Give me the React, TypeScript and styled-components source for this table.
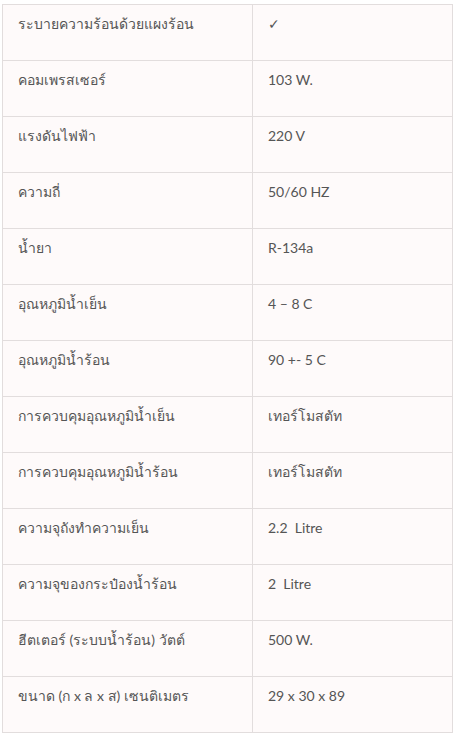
import styled, { createGlobalStyle } from "styled-components";

const GlobalStyle = createGlobalStyle`
  body {
    margin: 0;
    background: #ffffff;
    font-family: Lato, "Noto Sans", sans-serif;
  }
`;

const Wrapper = styled.div`
  padding: 4px 0 0 2px;
`;

const Table = styled.table`
  width: 450px;
  border-collapse: collapse;
  table-layout: fixed;
  background: #fefafa;
  color: #555555;
  font-size: 14px;
`;

const Row = styled.tr`
  height: 56px;
`;

const Cell = styled.td<{ $w: number }>`
  box-sizing: border-box;
  width: ${(p) => p.$w}px;
  border: 1px solid #e2dddd;
  padding: 9px 15px 0 15px;
  vertical-align: top;
  line-height: 20px;
  white-space: pre;
`;

const specs: [string, string][] = [
  ["ระบายความร้อนด้วยแผงร้อน", "✓"],
  ["คอมเพรสเซอร์", "103 W."],
  ["แรงดันไฟฟ้า", "220 V"],
  ["ความถี่", "50/60 HZ"],
  ["น้ำยา", "R-134a"],
  ["อุณหภูมิน้ำเย็น", "4 – 8 C"],
  ["อุณหภูมิน้ำร้อน", "90 +- 5 C"],
  ["การควบคุมอุณหภูมิน้ำเย็น", "เทอร์โมสตัท"],
  ["การควบคุมอุณหภูมิน้ำร้อน", "เทอร์โมสตัท"],
  ["ความจุถังทำความเย็น", "2.2  Litre"],
  ["ความจุของกระป๋องน้ำร้อน", "2  Litre"],
  ["ฮีตเตอร์ (ระบบน้ำร้อน) วัตต์", "500 W."],
  ["ขนาด (ก x ล x ส) เซนติเมตร", "29 x 30 x 89"],
];

function App() {
  return (
    <>
      <GlobalStyle />
      <Wrapper>
        <Table>
          <tbody>
            {specs.map(([label, value]) => (
              <Row key={label}>
                <Cell $w={250}>{label}</Cell>
                <Cell $w={200}>{value}</Cell>
              </Row>
            ))}
          </tbody>
        </Table>
      </Wrapper>
    </>
  );
}

export default App;
